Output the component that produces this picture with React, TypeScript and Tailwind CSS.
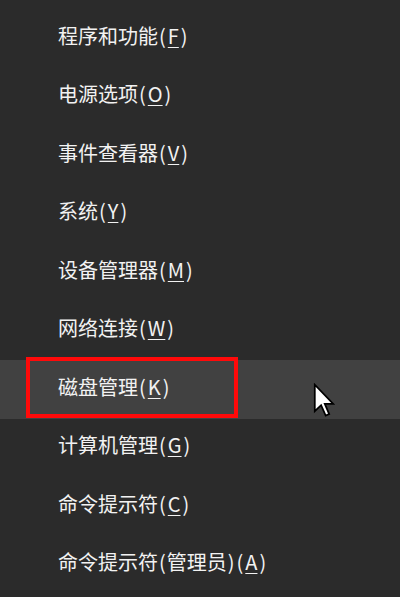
import React from "react";

type Item = { label: string; key: string };

const items: Item[] = [
  { label: "程序和功能", key: "F" },
  { label: "电源选项", key: "O" },
  { label: "事件查看器", key: "V" },
  { label: "系统", key: "Y" },
  { label: "设备管理器", key: "M" },
  { label: "网络连接", key: "W" },
  { label: "磁盘管理", key: "K" },
  { label: "计算机管理", key: "G" },
  { label: "命令提示符", key: "C" },
  { label: "命令提示符(管理员)", key: "A" },
];

function Paren({ c }: { c: string }) {
  return <span className="mx-[1px]">{c}</span>;
}

function Label({ text }: { text: string }) {
  return (
    <>
      {text.split("").map((ch, i) =>
        ch === "(" || ch === ")" ? <Paren key={i} c={ch} /> : <span key={i}>{ch}</span>
      )}
    </>
  );
}

export default function App() {
  return (
    <div
      className="relative w-[400px] h-[597px] overflow-hidden bg-[#2b2b2b] pt-[9px] text-[#f2f2f2]"
      style={{ fontFamily: '"Noto Sans CJK SC", "Noto Sans", sans-serif' }}
    >
      {items.map((it, i) => {
        const active = i === 6;
        return (
          <div
            key={it.label}
            className={`relative flex h-[58.5px] items-center pb-[5px] pl-[58px] text-[20px] leading-none ${
              active ? "bg-[#414141]" : ""
            }`}
          >
            <span className="whitespace-nowrap">
              <Label text={it.label} />
              <Paren c="(" />
              <span className="px-[1px] underline underline-offset-[3px] decoration-1">{it.key}</span>
              <Paren c=")" />
            </span>
            {active && (
              <div className="absolute left-[26px] top-[-3px] h-[61px] w-[212px] border-4 border-[#ff0a0a]" />
            )}
          </div>
        );
      })}
      <svg
        className="absolute left-[313px] top-[383px]"
        width="22"
        height="36"
        viewBox="0 0 12.5 20.5"
      >
        <path
          d="M1 1 L1 16 L4.6 12.6 L7.2 18.6 L9.2 17.7 L6.7 11.9 L11.5 11.9 Z"
          fill="#ffffff"
          stroke="#000000"
          strokeWidth="1"
          strokeLinejoin="miter"
        />
      </svg>
    </div>
  );
}
